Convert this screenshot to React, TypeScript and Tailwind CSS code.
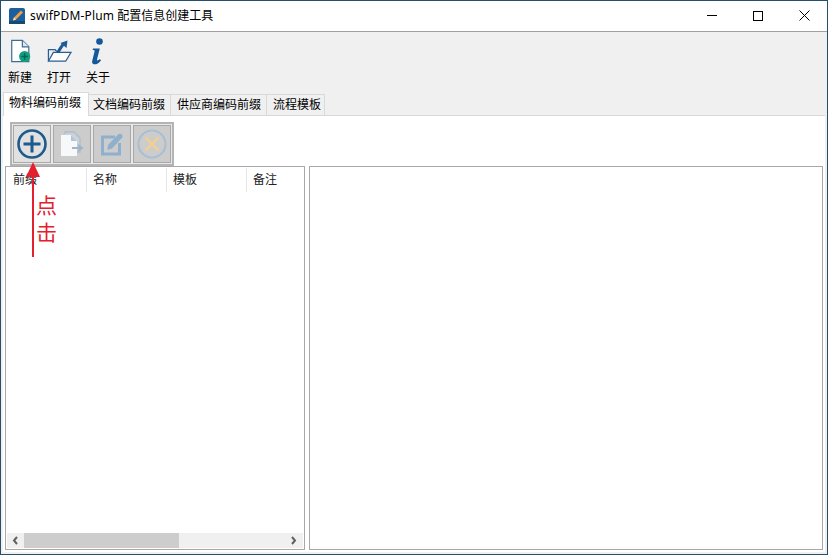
const CJK = "font-['Liberation_Sans','Noto_Sans_CJK_SC',sans-serif]";

function NewIcon() {
  return (
    <svg width="23" height="24" viewBox="0 0 24 26" className="block mb-[2px]">
      <path d="M2.500 1.500H14L21 8.500V24.500H2.500Z" fill="#fff" stroke="#3d6b94" strokeWidth="1.300" />
      <path d="M14 1.500V8.500H21" fill="#dfe8f0" stroke="#3d6b94" strokeWidth="1.300" />
      <circle cx="16.500" cy="19" r="6" fill="#0f9f7f" />
      <path d="M16.500 15.500V22.500M13 19H20" stroke="#0b5f50" strokeWidth="1.500" />
    </svg>
  );
}
function OpenIcon() {
  return (
    <svg width="27" height="23" viewBox="0 0 28 26" className="block mb-[2px]">
      <path d="M1.500 24V11H9L11 13" fill="none" stroke="#2a5f92" strokeWidth="1.400" />
      <path d="M1.500 24L7 14H27L21 24Z" fill="#fff" stroke="#2a5f92" strokeWidth="1.400" />
      <path d="M12 14L18 5" fill="none" stroke="#1c5a98" strokeWidth="3.400" />
      <path d="M15 3.500L23 0.500L22 9Z" fill="#1c5a98" />
    </svg>
  );
}
function InfoIcon() {
  return (
    <svg width="14" height="27" viewBox="0 0 14 27" className="block">
      <circle cx="8.500" cy="3.500" r="3.300" fill="#14589c" />
      <path d="M2 10.500H8.800L6 21.500C5.800 22.700 6.800 23 8.800 21L10 22.200C7.500 25.800 4.500 26.800 2.600 26.200C1 25.600 0.900 24 1.300 22.500L3.600 13.200C3.800 12.300 3 12 1.600 12Z" fill="#14589c" />
    </svg>
  );
}
function AppIcon() {
  return (
    <svg width="16" height="16" viewBox="0 0 16 16" className="block">
      <rect x="0" y="0" width="16" height="16" rx="2" fill="#1c5f9e" />
      <rect x="0" y="13" width="16" height="3" fill="#174a70" />
      <path d="M4 12.500L5 9.500L12 2.500L14 4.500L7 11.500Z" fill="#f0a040" />
      <path d="M4 12.500L5 9.500L7 11.500Z" fill="#fbe3c0" />
    </svg>
  );
}
function PlusIcon() {
  return (
    <svg width="30" height="30" viewBox="0 0 30 30" className="block">
      <circle cx="15" cy="15" r="13.500" fill="none" stroke="#1f5a8c" strokeWidth="2.600" />
      <path d="M15 6.500V23.500M6.500 15H23.500" stroke="#1f5a8c" strokeWidth="3" />
    </svg>
  );
}
function CopyIcon() {
  return (
    <svg width="24" height="26" viewBox="0 0 24 26" className="block">
      <path d="M5 3V1H14L20 7V21H17" fill="#c9d2da" stroke="#aebdca" strokeWidth="1.300" />
      <path d="M1 4H11L17 10V25H1Z" fill="#f7f8f9" />
      <path d="M11 4V10H17Z" fill="#b6c4d0" />
      <path d="M12 17H21M18 14L22 17L18 20" fill="none" stroke="#9fb4c6" strokeWidth="2" />
    </svg>
  );
}
function EditIcon() {
  return (
    <svg width="24" height="24" viewBox="0 0 24 24" className="block">
      <path d="M15 5H2.500V22H19.500V11" fill="none" stroke="#8fb0cc" strokeWidth="3" />
      <path d="M8 13L18 2.500C19 1.500 20.500 1.300 21.800 2.400C23 3.600 22.800 5 21.800 6L12 16.500L7.500 18Z" fill="#8fb0cc" />
    </svg>
  );
}
function CancelIcon() {
  return (
    <svg width="30" height="30" viewBox="0 0 30 30" className="block">
      <circle cx="15" cy="15" r="13.500" fill="none" stroke="#a9bfd2" strokeWidth="2.200" />
      <path d="M8.500 8.500L21.500 21.500M21.500 8.500L8.500 21.500" stroke="#f3d08f" strokeWidth="2.400" />
    </svg>
  );
}

function ToolItem({ label, icon, w }: { label: string; icon: React.ReactNode; w: string }) {
  return (
    <div className={`flex flex-col items-center ${w}`}>
      <div className="h-[27px] flex items-end justify-center">{icon}</div>
      <span className="text-[12px] leading-[16px] mt-[5px] text-black">{label}</span>
    </div>
  );
}

function Tab({ label, pad }: { label: string; pad: string }) {
  return (
    <div className={`h-[22px] mt-[2px] ${pad} bg-[#f0f0f0] border border-l-0 border-[#d9d9d9] text-[12px] leading-[20px] text-black`}>
      {label}
    </div>
  );
}

function ActionBtn({ children, active }: { children: React.ReactNode; active?: boolean }) {
  return (
    <div className={`w-[38px] h-[38px] flex items-center justify-center border border-[#a8a8a8] ${active ? "bg-[#e1e1e1]" : "bg-[#cccccc]"}`}>
      {children}
    </div>
  );
}

export default function App() {
  return (
    <div className={`${CJK} w-[828px] h-[555px] border border-[#25506a] bg-[#f0f0f0] flex flex-col overflow-hidden relative`}>
      <div className="h-[31px] pb-[1px] bg-white flex items-center border-b border-[#a0a0a0] shrink-0">
        <div className="ml-[8px] mr-[5px]"><AppIcon /></div>
        <span className="text-[12px] text-black font-['Noto_Sans','Noto_Sans_CJK_SC',sans-serif]">
          <span className="tracking-[0.17px]">swifPDM-Plum</span> 配置信息创建工具
        </span>
        <div className="ml-auto flex items-center h-full">
          <div className="w-[46px] h-full flex items-center justify-center">
            <div className="w-[10px] h-px bg-black" />
          </div>
          <div className="w-[46px] h-full flex items-center justify-center">
            <div className="w-[10px] h-[10px] border border-black" />
          </div>
          <div className="w-[46px] h-full flex items-center justify-center">
            <svg width="11" height="11" viewBox="0 0 11 11"><path d="M0.500 0.500L10.500 10.500M10.500 0.500L0.500 10.500" stroke="#000" strokeWidth="1" /></svg>
          </div>
        </div>
      </div>

      <div className="h-[60px] flex items-start pt-[6px] pl-[1px] gap-[3px] shrink-0">
        <ToolItem label="新建" w="w-[36px]" icon={<NewIcon />} />
        <ToolItem label="打开" w="w-[36px]" icon={<OpenIcon />} />
        <ToolItem label="关于" w="w-[36px]" icon={<InfoIcon />} />
      </div>

      <div className="flex items-start pl-[2px] h-[24px] shrink-0 -mb-px">
        <div className="h-[24px] pl-[5px] pr-[7px] bg-white border border-b-0 border-[#d9d9d9] text-[12px] leading-[20px] text-black relative z-10">
          物料编码前缀
        </div>
        <Tab label="文档编码前缀" pad="pl-[4px] pr-[5px]" />
        <Tab label="供应商编码前缀" pad="pl-[6px] pr-[5px]" />
        <Tab label="流程模板" pad="pl-[6px] pr-[3px]" />
      </div>

      <div className="flex-1 mx-[2px] mb-[2px] pb-[2px] bg-white border-t border-[#d9d9d9] flex flex-col min-h-0">
        <div className="self-start ml-[7px] mt-[6px] border-2 border-[#b4b4b4] bg-[#e8e8e8] p-[1px] flex gap-[2px] h-[44px] items-center">
          <ActionBtn active><PlusIcon /></ActionBtn>
          <ActionBtn><CopyIcon /></ActionBtn>
          <ActionBtn><EditIcon /></ActionBtn>
          <ActionBtn><CancelIcon /></ActionBtn>
        </div>

        <div className="flex-1 flex gap-[4px] ml-[2px] mr-[2px] min-h-0">
          <div className="w-[300px] border border-[#a8a8a8] bg-white flex flex-col relative">
            <div className="flex h-[24px] mt-[1px] text-[12px] leading-[24px] text-[#222]">
              {["前缀", "名称", "模板", "备注"].map((h) => (
                <div key={h} className="w-[80px] shrink-0 pl-[6px] border-l border-[#e5e5e5] first:border-l-0 first:pl-[7px]">{h}</div>
              ))}
            </div>
            <div className="flex-1" />
            <div className="h-[15px] mx-[1px] mb-[1px] bg-[#f0f0f0] flex items-center justify-between">
              <div className="flex items-center h-full">
                <svg width="17" height="15" viewBox="0 0 17 15"><path d="M10 4L7 7.500L10 11" fill="none" stroke="#606060" strokeWidth="2" /></svg>
                <div className="w-[155px] h-full bg-[#cdcdcd]" />
              </div>
              <svg width="17" height="15" viewBox="0 0 17 15"><path d="M6 4L9 7.500L6 11" fill="none" stroke="#606060" strokeWidth="2" /></svg>
            </div>

            <div className="absolute left-[20px] top-[-5px] w-0 h-0 border-l-[7px] border-r-[7px] border-b-[15px] border-l-transparent border-r-transparent border-b-[#e5202e]" />
            <div className="absolute left-[26px] top-[9px] w-[2px] h-[81px] bg-[#e5202e]" />
            <div className="absolute left-[30px] top-[25px] text-[21px] leading-[27px] text-[#e5202e] w-[24px]">点<br />击</div>
          </div>
          <div className="flex-1 border border-[#a8a8a8] bg-white" />
        </div>
      </div>
    </div>
  );
}
